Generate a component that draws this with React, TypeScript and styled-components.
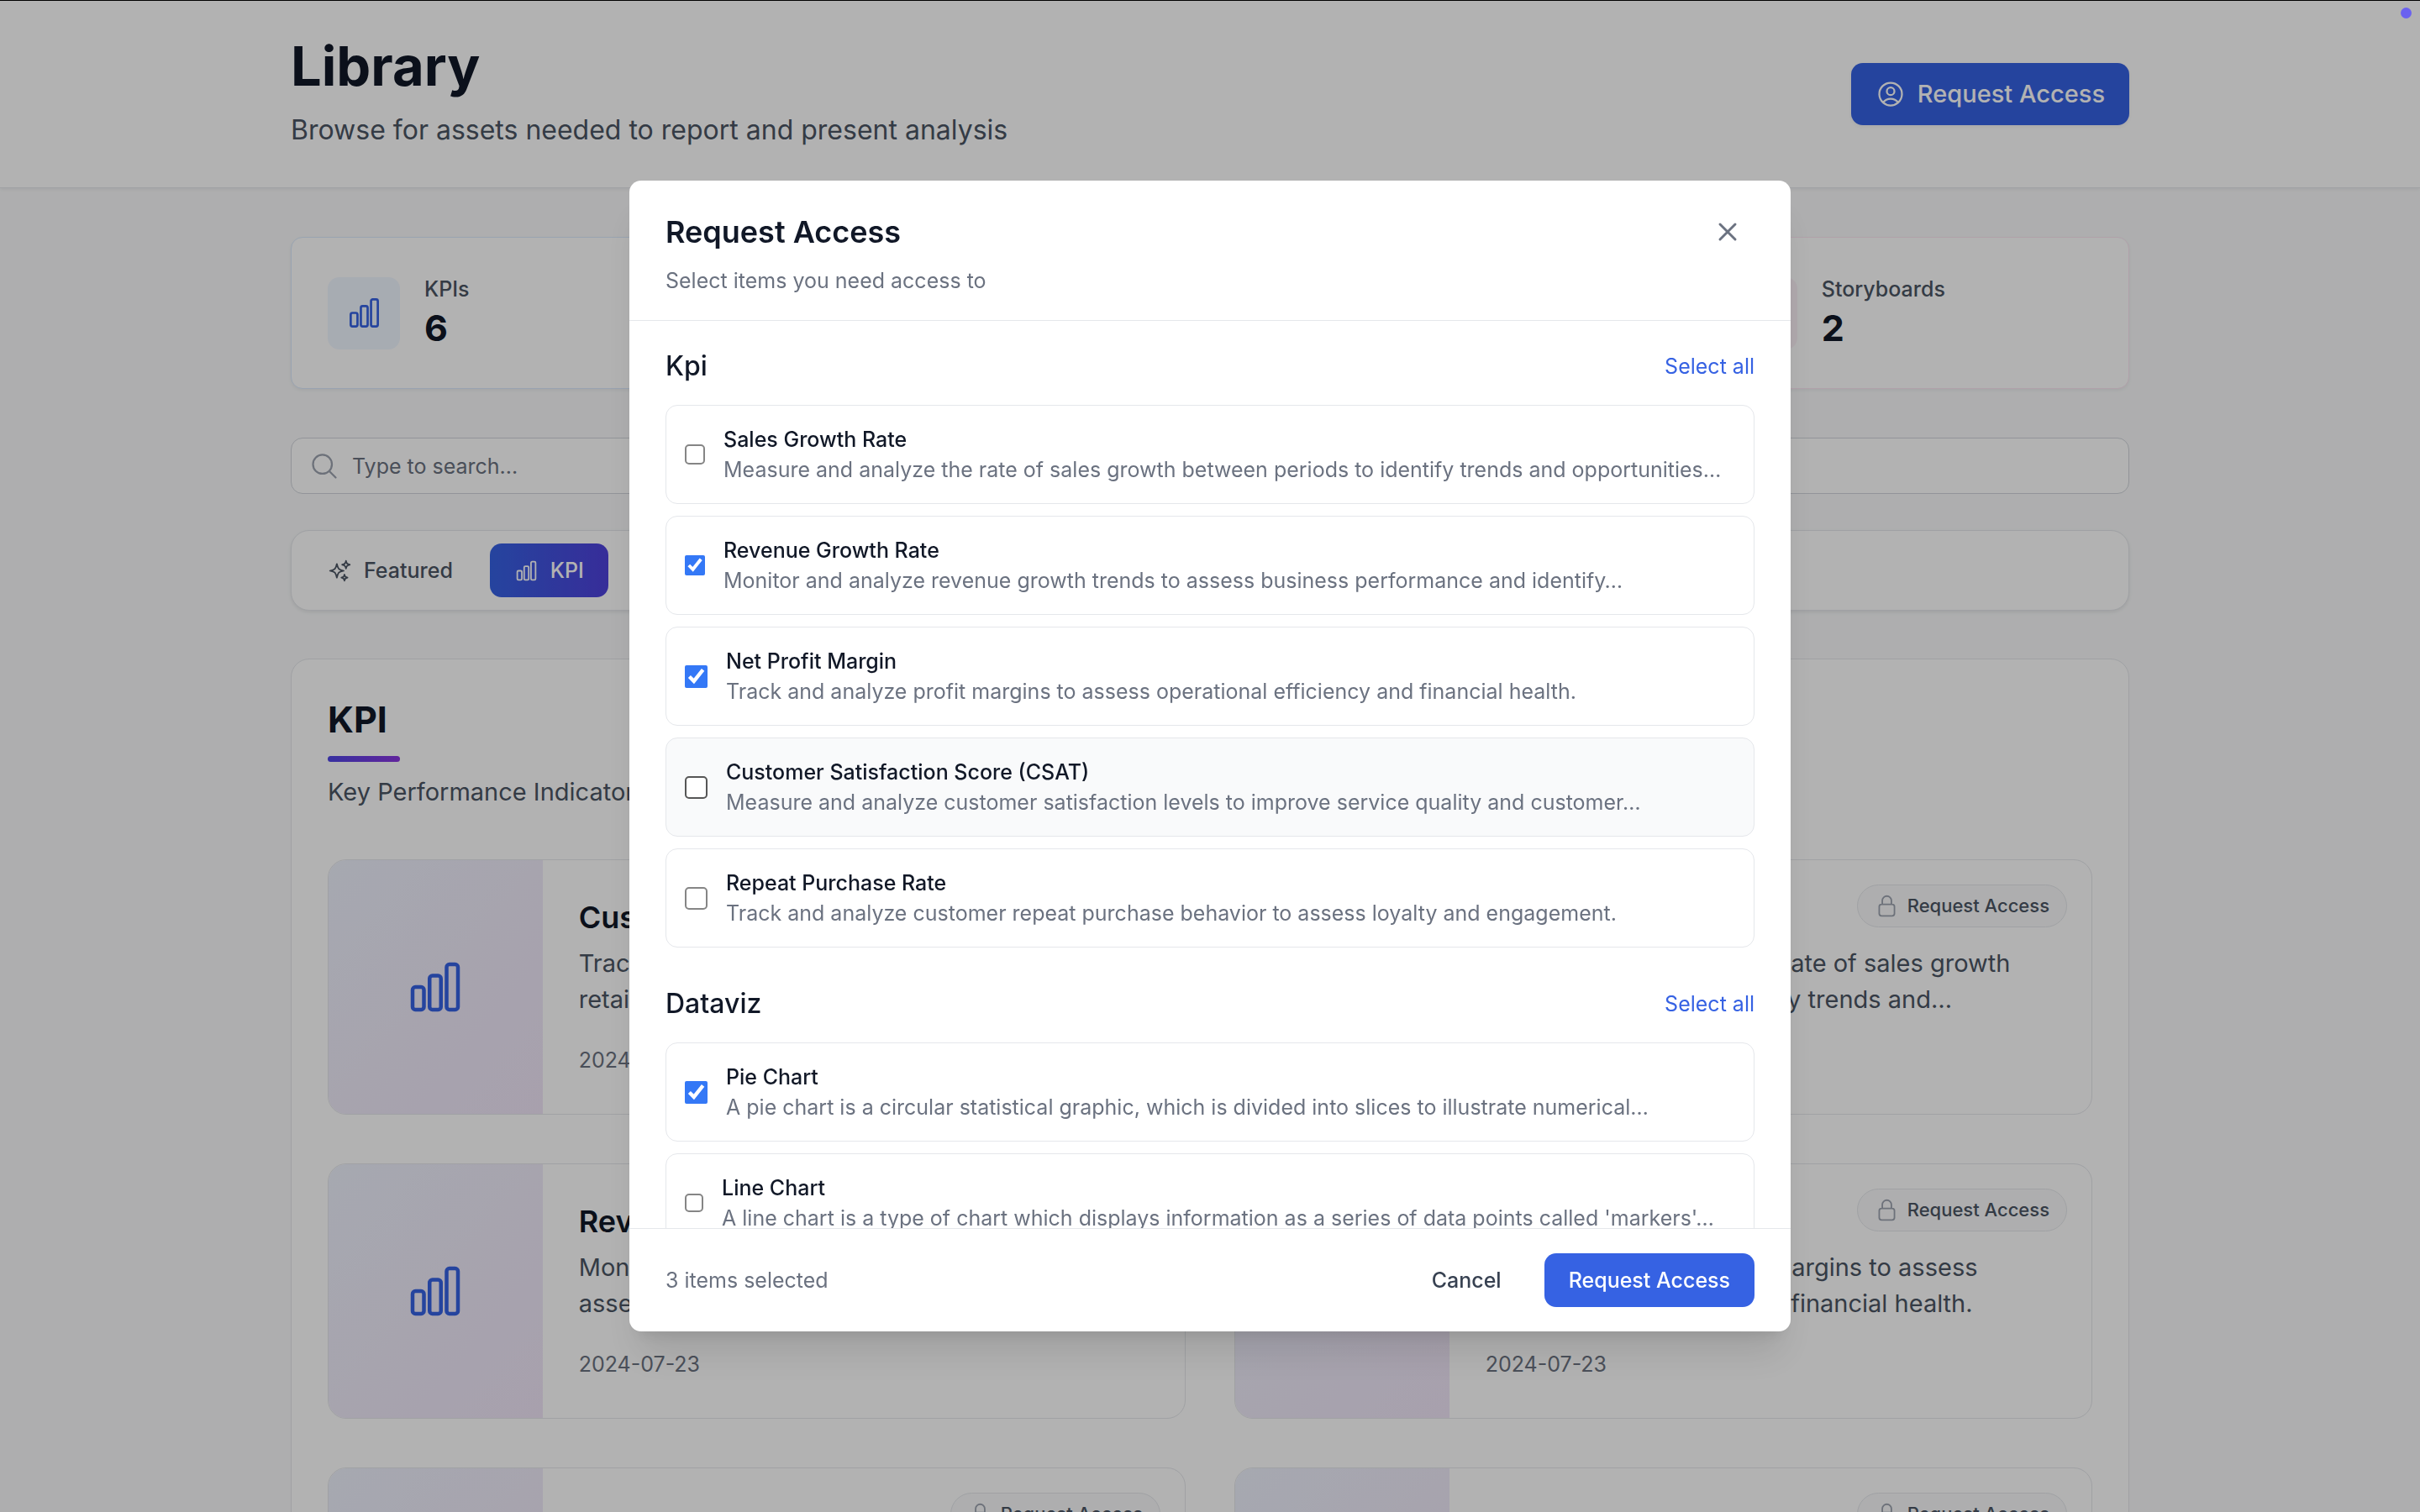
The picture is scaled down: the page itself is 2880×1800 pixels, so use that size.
import React, { useState } from 'react';
import styled, { createGlobalStyle, css } from 'styled-components';

const GlobalStyle = createGlobalStyle`
  *, *::before, *::after { box-sizing: border-box; }
  html, body { height: 100%; }
  body {
    margin: 0;
    overflow: hidden;
    background: #f9fafb;
    color: #111827;
    font-family: Inter, "Liberation Sans", sans-serif;
  }
  h1, h2, h3, p { margin: 0; }
  button, input { font-family: inherit; }
`;

/* ---------- icons ---------- */

const Svg = styled.svg<{ $size: number; $weight: number }>`
  display: block;
  flex: none;
  width: ${p => p.$size}px;
  height: ${p => p.$size}px;
  fill: none;
  stroke: currentColor;
  stroke-width: ${p => p.$weight};
  stroke-linecap: round;
  stroke-linejoin: round;
`;

const paths = {
  chart:
    'M3 13.125C3 12.504 3.504 12 4.125 12h2.25c.621 0 1.125.504 1.125 1.125v6.75C7.5 20.496 6.996 21 6.375 21h-2.25A1.125 1.125 0 0 1 3 19.875v-6.75ZM9.75 8.625c0-.621.504-1.125 1.125-1.125h2.25c.621 0 1.125.504 1.125 1.125v11.25c0 .621-.504 1.125-1.125 1.125h-2.25a1.125 1.125 0 0 1-1.125-1.125V8.625ZM16.5 4.125c0-.621.504-1.125 1.125-1.125h2.25C20.496 3 21 3.504 21 4.125v15.75c0 .621-.504 1.125-1.125 1.125h-2.25a1.125 1.125 0 0 1-1.125-1.125V4.125Z',
  user:
    'M17.982 18.725A7.488 7.488 0 0 0 12 15.75a7.488 7.488 0 0 0-5.982 2.975m11.963 0a9 9 0 1 0-11.963 0m11.963 0A8.966 8.966 0 0 1 12 21a8.966 8.966 0 0 1-5.982-2.275M15 9.75a3 3 0 1 1-6 0 3 3 0 0 1 6 0Z',
  search: 'm21 21-5.197-5.197m0 0A7.5 7.5 0 1 0 5.196 5.196a7.5 7.5 0 0 0 10.607 10.607Z',
  sparkles:
    'M9.813 15.904 9 18.75l-.813-2.846a4.5 4.5 0 0 0-3.09-3.09L2.25 12l2.846-.813a4.5 4.5 0 0 0 3.09-3.09L9 5.25l.813 2.846a4.5 4.5 0 0 0 3.09 3.09L15.75 12l-2.846.813a4.5 4.5 0 0 0-3.09 3.09ZM18.259 8.715 18 9.75l-.259-1.035a3.375 3.375 0 0 0-2.455-2.456L14.25 6l1.036-.259a3.375 3.375 0 0 0 2.455-2.456L18 2.25l.259 1.035a3.375 3.375 0 0 0 2.456 2.456L21.75 6l-1.035.259a3.375 3.375 0 0 0-2.456 2.456ZM16.894 20.567 16.5 21.75l-.394-1.183a2.25 2.25 0 0 0-1.423-1.423L13.5 18.75l1.183-.394a2.25 2.25 0 0 0 1.423-1.423l.394-1.183.394 1.183a2.25 2.25 0 0 0 1.423 1.423l1.183.394-1.183.394a2.25 2.25 0 0 0-1.423 1.423Z',
  lock:
    'M16.5 10.5V6.75a4.5 4.5 0 1 0-9 0v3.75m-.75 11.25h10.5a2.25 2.25 0 0 0 2.25-2.25v-6.75a2.25 2.25 0 0 0-2.25-2.25H6.75a2.25 2.25 0 0 0-2.25 2.25v6.75a2.25 2.25 0 0 0 2.25 2.25Z',
  close: 'M6 18 18 6M6 6l12 12',
};

function Icon({ name, size, weight = 1.5 }: { name: keyof typeof paths; size: number; weight?: number }) {
  return (
    <Svg $size={size} $weight={weight} viewBox="0 0 24 24" aria-hidden="true">
      <path d={paths[name]} />
    </Svg>
  );
}

/* ---------- page ---------- */

const Page = styled.div`
  height: 100vh;
  overflow: hidden;
`;

const container = css`
  width: 100%;
  max-width: 2304px;
  margin: 0 auto;
  padding-left: 58px;
  padding-right: 58px;
`;

const Header = styled.header`
  border-top: 1px solid #000;
  border-bottom: 1px solid #e5e7eb;
  background: #fff;
  box-shadow: 0 2px 4px rgba(0, 0, 0, 0.05);
`;

const HeaderInner = styled.div`
  ${container}
  display: flex;
  align-items: center;
  justify-content: space-between;
  padding-top: 42px;
  padding-bottom: 43px;
`;

const Title = styled.h1`
  font-size: 65px;
  line-height: 72px;
  font-weight: 700;
`;

const Subtitle = styled.p`
  margin-top: 14px;
  color: #4b5563;
  font-size: 32px;
  line-height: 51px;
`;

const HeaderButton = styled.button`
  display: flex;
  align-items: center;
  gap: 14px;
  padding: 15px 29px;
  border: 0;
  border-radius: 14px;
  background: #3662e3;
  color: #fff;
  font-size: 29px;
  line-height: 44px;
  font-weight: 500;
  box-shadow: 0 2px 4px rgba(0, 0, 0, 0.05);
`;

const Main = styled.main`
  ${container}
  padding-top: 58px;
`;

const Stats = styled.section`
  display: grid;
  grid-template-columns: repeat(4, 1fr);
  gap: 29px;
`;

const StatCard = styled.article<{ $line: string }>`
  display: flex;
  align-items: center;
  gap: 29px;
  padding: 43px;
  border: 1px solid ${p => p.$line};
  border-radius: 14px;
  background: #fff;
  box-shadow: 0 2px 4px rgba(0, 0, 0, 0.05);
`;

const StatIcon = styled.span<{ $ink: string; $fill: string }>`
  display: grid;
  place-items: center;
  width: 86px;
  height: 86px;
  border-radius: 14px;
  background: ${p => p.$fill};
  color: ${p => p.$ink};
`;

const StatLabel = styled.p`
  color: #4b5563;
  font-size: 25px;
  line-height: 36px;
  font-weight: 500;
`;

const StatValue = styled.p`
  font-size: 43px;
  line-height: 57px;
  font-weight: 700;
`;

const SearchBar = styled.label`
  display: flex;
  align-items: center;
  gap: 15px;
  margin-top: 58px;
  padding: 14px 21px;
  border: 1px solid #d1d5db;
  border-radius: 14px;
  background: #fff;
  color: #9ca3af;
`;

const SearchInput = styled.input`
  flex: 1;
  height: 37px;
  padding: 0;
  border: 0;
  outline: 0;
  background: none;
  color: #111827;
  font-size: 25px;
  line-height: 36px;
  &::placeholder { color: #6b7280; opacity: 1; }
`;

const Tabs = styled.nav`
  display: flex;
  gap: 15px;
  margin-top: 43px;
  padding: 15px 14px;
  border: 1px solid #e5e7eb;
  border-radius: 22px;
  background: #fff;
  box-shadow: 0 2px 4px rgba(0, 0, 0, 0.08);
`;

const Tab = styled.button<{ $active?: boolean }>`
  display: flex;
  align-items: center;
  gap: 14px;
  padding: 14px 29px;
  border: 0;
  border-radius: 14px;
  background: ${p => (p.$active ? 'linear-gradient(to right, #3662e3, #4f41dc)' : 'none')};
  color: ${p => (p.$active ? '#fff' : '#4b5563')};
  font-size: 25px;
  line-height: 36px;
  font-weight: 500;
`;

const Panel = styled.section`
  margin-top: 57px;
  padding: 43px;
  border: 1px solid #e5e7eb;
  border-radius: 22px;
  background: #fff;
`;

const PanelTitle = styled.h2`
  font-size: 43px;
  line-height: 57px;
  font-weight: 700;
`;

const Accent = styled.hr`
  width: 86px;
  height: 7px;
  margin: 15px 0 14px;
  border: 0;
  border-radius: 4px;
  background: linear-gradient(to right, #4f46e5, #8b35e0);
`;

const PanelText = styled.p`
  color: #4b5563;
  font-size: 29px;
  line-height: 44px;
`;

const Cards = styled.div`
  display: grid;
  grid-template-columns: repeat(2, 1fr);
  gap: 58px;
  margin-top: 58px;
`;

const Card = styled.article`
  position: relative;
  display: flex;
  overflow: hidden;
  border: 1px solid #e5e7eb;
  border-radius: 22px;
  background: #fff;
`;

const Thumb = styled.div`
  display: grid;
  place-items: center;
  flex: none;
  width: 25%;
  background: linear-gradient(to right bottom, #eef2fd, #efebfa, #f1e6f8);
  color: #3662e3;
`;

const CardBody = styled.div`
  flex: 1;
  padding: 43px 43px 42px;
`;

const CardTitle = styled.h3`
  font-size: 36px;
  line-height: 51px;
  font-weight: 600;
`;

const CardText = styled.p`
  margin-top: 7px;
  color: #4b5563;
  font-size: 29px;
  line-height: 43px;
`;

const CardDate = styled.p`
  margin-top: 30px;
  color: #6b7280;
  font-size: 25px;
  line-height: 43px;
`;

const Pill = styled.button`
  position: absolute;
  top: 29px;
  right: 29px;
  display: flex;
  align-items: center;
  gap: 10px;
  padding: 10px 20px;
  border: 1px solid #e5e7eb;
  border-radius: 26px;
  background: #f9fafb;
  color: #9ca3af;
  font-size: 22px;
  line-height: 29px;
  font-weight: 500;
`;

const PillText = styled.span`
  color: #4b5563;
`;

/* ---------- dialog ---------- */

const Overlay = styled.div`
  position: fixed;
  inset: 0;
  display: grid;
  place-items: center;
  background: rgba(0, 0, 0, 0.3);
`;

const StatusDot = styled.span`
  position: fixed;
  top: 9px;
  right: 10px;
  width: 13px;
  height: 13px;
  border-radius: 50%;
  background: #6a61f0;
`;

const Dialog = styled.div`
  display: flex;
  flex-direction: column;
  width: 100%;
  max-width: 1382px;
  overflow: hidden;
  border-radius: 14px;
  background: #fff;
  box-shadow: 0 36px 45px -9px rgba(0, 0, 0, 0.1), 0 14px 18px -11px rgba(0, 0, 0, 0.1);
`;

const DialogHeader = styled.div`
  padding: 29px 43px;
  border-bottom: 1px solid #e5e7eb;
`;

const Row = styled.div`
  display: flex;
  align-items: center;
  justify-content: space-between;
`;

const DialogTitle = styled.h2`
  font-size: 36px;
  line-height: 50px;
  font-weight: 600;
`;

const Note = styled.p`
  color: #6b7280;
  font-size: 25px;
  line-height: 36px;
`;

const HeaderNote = styled(Note)`
  margin-top: 8px;
`;

const CloseButton = styled.button`
  padding: 14px;
  border: 0;
  border-radius: 14px;
  background: none;
  color: #6b7280;
`;

const DialogBody = styled.div`
  height: 60vh;
  padding: 29px 43px;
  overflow: hidden;
`;

const Group = styled.section`
  & + & { margin-top: 42px; }
`;

const GroupTitle = styled.h3`
  font-size: 32px;
  line-height: 50px;
  font-weight: 500;
`;

const SelectAll = styled.button`
  padding: 0;
  border: 0;
  background: none;
  color: #3662e3;
  font-size: 25px;
  line-height: 36px;
`;

const Items = styled.div`
  display: flex;
  flex-direction: column;
  gap: 14px;
  margin-top: 21px;
`;

const Item = styled.label<{ $hover?: boolean }>`
  --tick-line: ${p => (p.$hover ? '#565656' : '#858585')};
  display: flex;
  align-items: center;
  gap: 22px;
  padding: 22px;
  border: 1px solid #e5e7eb;
  border-radius: 14px;
  background: ${p => (p.$hover ? '#f9fafb' : '#fff')};
`;

const Check = styled.input<{ $size: number }>`
  flex: none;
  width: ${p => p.$size}px;
  height: ${p => p.$size}px;
  margin: 0;
  accent-color: #3478f6;
  &:not(:checked) {
    appearance: none;
    border: 2px solid var(--tick-line);
    border-radius: 5px;
    background: #fff;
  }
`;

const ItemName = styled.span`
  display: block;
  color: #111827;
  font-size: 25px;
  line-height: 36px;
  font-weight: 500;
`;

const ItemText = styled.span`
  display: block;
  color: #6b7280;
  font-size: 25px;
  line-height: 36px;
  white-space: nowrap;
`;

const DialogFooter = styled.div`
  display: flex;
  align-items: center;
  justify-content: space-between;
  padding: 29px 43px;
  border-top: 1px solid #e5e7eb;
`;

const Actions = styled.div`
  display: flex;
  gap: 22px;
`;

const Action = styled.button<{ $primary?: boolean }>`
  padding: 14px 29px;
  border: 0;
  border-radius: 14px;
  background: ${p => (p.$primary ? '#3662e3' : 'none')};
  color: ${p => (p.$primary ? '#fff' : '#374151')};
  font-size: 25px;
  line-height: 36px;
  font-weight: 500;
`;

/* ---------- data ---------- */

const stats = [
  { label: 'KPIs', value: 6, line: '#dbeafe', fill: '#eff6ff', ink: '#3662e3' },
  { label: 'Layouts', value: 4, line: '#dcfce7', fill: '#f0fdf4', ink: '#16a34a' },
  { label: 'Dataviz', value: 5, line: '#f3e8ff', fill: '#faf5ff', ink: '#9333ea' },
  { label: 'Storyboards', value: 2, line: '#fce7f3', fill: '#fdf2f8', ink: '#db2777' },
];

const cards = [
  { title: 'Customer Churn Rate', text: 'Track and analyze customer churn to improve retaining loyal customers.' },
  { title: 'Sales Growth Rate', text: 'Measure and analyze the rate of sales growth between periods to identify trends and…' },
  { title: 'Revenue Growth Rate', text: 'Monitor and analyze revenue growth trends to assess business performance and…' },
  { title: 'Net Profit Margin', text: 'Track and analyze profit margins to assess operational efficiency and financial health.' },
  { title: 'CSAT', text: 'Measure and analyze customer satisfaction levels to improve service quality and…' },
  { title: 'Repeat Purchase Rate', text: 'Track and analyze customer repeat purchase behavior to assess loyalty and engagement.' },
];

const groups = [
  {
    name: 'Kpi',
    items: [
      { name: 'Sales Growth Rate', size: 24, text: 'Measure and analyze the rate of sales growth between periods to identify trends and opportunities…' },
      { name: 'Revenue Growth Rate', size: 24, text: 'Monitor and analyze revenue growth trends to assess business performance and identify…' },
      { name: 'Net Profit Margin', size: 27, text: 'Track and analyze profit margins to assess operational efficiency and financial health.' },
      { name: 'Customer Satisfaction Score (CSAT)', size: 27, hover: true, text: 'Measure and analyze customer satisfaction levels to improve service quality and customer…' },
      { name: 'Repeat Purchase Rate', size: 27, text: 'Track and analyze customer repeat purchase behavior to assess loyalty and engagement.' },
    ],
  },
  {
    name: 'Dataviz',
    items: [
      { name: 'Pie Chart', size: 27, text: 'A pie chart is a circular statistical graphic, which is divided into slices to illustrate numerical…' },
      { name: 'Line Chart', size: 22, text: "A line chart is a type of chart which displays information as a series of data points called 'markers'…" },
    ],
  },
];

export default function App() {
  const [selected, setSelected] = useState(['Revenue Growth Rate', 'Net Profit Margin', 'Pie Chart']);
  const toggle = (name: string) =>
    setSelected(s => (s.includes(name) ? s.filter(n => n !== name) : [...s, name]));
  const selectAll = (names: string[]) => setSelected(s => Array.from(new Set([...s, ...names])));

  return (
    <>
      <GlobalStyle />
      <Page>
        <Header>
          <HeaderInner>
            <div>
              <Title>Library</Title>
              <Subtitle>Browse for assets needed to report and present analysis</Subtitle>
            </div>
            <HeaderButton type="button">
              <Icon name="user" size={36} />
              Request Access
            </HeaderButton>
          </HeaderInner>
        </Header>
        <Main>
          <Stats>
            {stats.map(s => (
              <StatCard key={s.label} $line={s.line}>
                <StatIcon $fill={s.fill} $ink={s.ink}>
                  <Icon name="chart" size={43} />
                </StatIcon>
                <div>
                  <StatLabel>{s.label}</StatLabel>
                  <StatValue>{s.value}</StatValue>
                </div>
              </StatCard>
            ))}
          </Stats>
          <SearchBar>
            <Icon name="search" size={36} />
            <SearchInput type="text" placeholder="Type to search..." aria-label="Search" />
          </SearchBar>
          <Tabs>
            <Tab type="button">
              <Icon name="sparkles" size={29} />
              Featured
            </Tab>
            <Tab type="button" $active>
              <Icon name="chart" size={29} />
              KPI
            </Tab>
          </Tabs>
          <Panel>
            <PanelTitle>KPI</PanelTitle>
            <Accent />
            <PanelText>Key Performance Indicators to measure success</PanelText>
            <Cards>
              {cards.map(c => (
                <Card key={c.title}>
                  <Thumb>
                    <Icon name="chart" size={72} />
                  </Thumb>
                  <CardBody>
                    <CardTitle>{c.title}</CardTitle>
                    <CardText>{c.text}</CardText>
                    <CardDate>2024-07-23</CardDate>
                  </CardBody>
                  <Pill type="button">
                    <Icon name="lock" size={29} />
                    <PillText>Request Access</PillText>
                  </Pill>
                </Card>
              ))}
            </Cards>
          </Panel>
        </Main>
      </Page>

      <Overlay>
        <Dialog role="dialog" aria-modal="true" aria-labelledby="dialog-title">
          <DialogHeader>
            <Row>
              <DialogTitle id="dialog-title">Request Access</DialogTitle>
              <CloseButton type="button" aria-label="Close">
                <Icon name="close" size={36} weight={2} />
              </CloseButton>
            </Row>
            <HeaderNote>Select items you need access to</HeaderNote>
          </DialogHeader>
          <DialogBody>
            {groups.map(g => (
              <Group key={g.name}>
                <Row>
                  <GroupTitle>{g.name}</GroupTitle>
                  <SelectAll type="button" onClick={() => selectAll(g.items.map(i => i.name))}>
                    Select all
                  </SelectAll>
                </Row>
                <Items>
                  {g.items.map(i => (
                    <Item key={i.name} $hover={'hover' in i}>
                      <Check
                        type="checkbox"
                        $size={i.size}
                        checked={selected.includes(i.name)}
                        onChange={() => toggle(i.name)}
                      />
                      <span>
                        <ItemName>{i.name}</ItemName>
                        <ItemText>{i.text}</ItemText>
                      </span>
                    </Item>
                  ))}
                </Items>
              </Group>
            ))}
          </DialogBody>
          <DialogFooter>
            <Note>{selected.length} items selected</Note>
            <Actions>
              <Action type="button">Cancel</Action>
              <Action type="button" $primary>
                Request Access
              </Action>
            </Actions>
          </DialogFooter>
        </Dialog>
      </Overlay>
      <StatusDot />
    </>
  );
}
